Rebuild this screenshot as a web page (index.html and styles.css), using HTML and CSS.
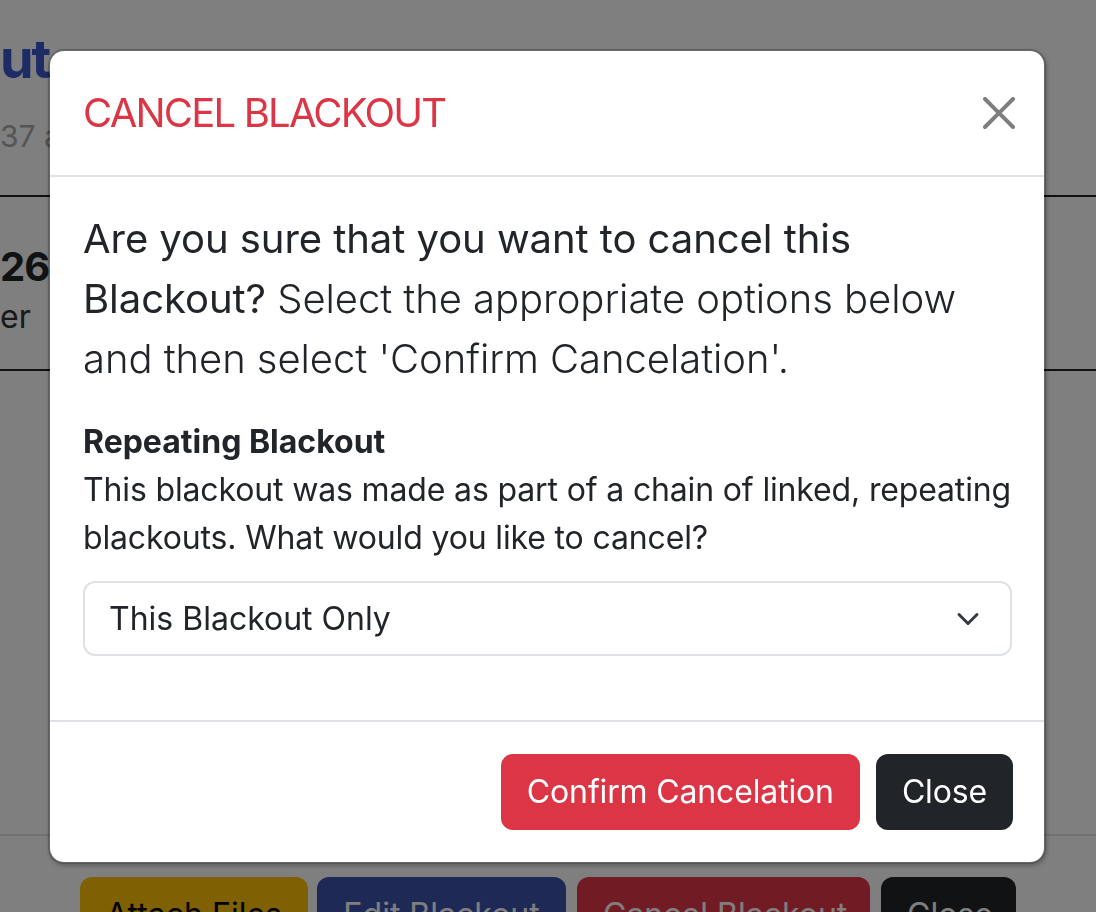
FILE: index.html
```html
<!DOCTYPE html>
<html lang="en">
<head>
<meta charset="utf-8">
<title>Cancel Blackout</title>
<link rel="stylesheet" href="styles.css">
</head>
<body>
<div class="page">
  <h2 class="page-title">ut</h2>
  <p class="page-sub">37 a</p>
  <div class="summary">
    <div class="summary-num">26</div>
    <div class="summary-label">er</div>
  </div>
  <div class="page-spacer"></div>
  <div class="page-footer">
    <button class="pbtn pbtn-warning">Attach Files</button>
    <button class="pbtn pbtn-primary">Edit Blackout</button>
    <button class="pbtn pbtn-danger">Cancel Blackout</button>
    <button class="pbtn pbtn-dark">Close</button>
  </div>
</div>

<div class="backdrop"></div>

<div class="modal">
  <div class="modal-dialog">
    <div class="modal-header">
      <h5 class="modal-title">CANCEL BLACKOUT</h5>
      <button class="btn-close" aria-label="Close">
        <svg viewBox="0 0 16 16" width="32" height="32"><path fill="#000" d="M.293.293a1 1 0 0 1 1.414 0L8 6.586 14.293.293a1 1 0 1 1 1.414 1.414L9.414 8l6.293 6.293a1 1 0 0 1-1.414 1.414L8 9.414l-6.293 6.293a1 1 0 0 1-1.414-1.414L6.586 8 .293 1.707a1 1 0 0 1 0-1.414z"/></svg>
      </button>
    </div>
    <div class="modal-body">
      <p class="lead"><span class="lead-strong">Are you sure that you want to cancel this Blackout?</span> Select the appropriate options below and then select 'Confirm Cancelation'.</p>
      <div class="field-label">Repeating Blackout</div>
      <p class="field-help">This blackout was made as part of a chain of linked, repeating blackouts. What would you like to cancel?</p>
      <div class="select">
        <span>This Blackout Only</span>
        <svg class="chev" viewBox="0 0 16 16" width="32" height="24" preserveAspectRatio="xMidYMid meet"><path fill="none" stroke="#343a40" stroke-linecap="round" stroke-linejoin="round" stroke-width="2" d="m2 5 6 6 6-6"/></svg>
      </div>
    </div>
    <div class="modal-footer">
      <button class="btn btn-danger">Confirm Cancelation</button>
      <button class="btn btn-dark">Close</button>
    </div>
  </div>
</div>
</body>
</html>
```

FILE: styles.css
```css
* { box-sizing: border-box; }
html, body { margin: 0; padding: 0; }
body {
  width: 1096px;
  height: 912px;
  overflow: hidden;
  background: #fff;
  font-family: Inter, "Noto Sans", "Liberation Sans", sans-serif;
  color: #212529;
  font-size: 32px;
  line-height: 1.5;
}
button { font-family: inherit; }

/* underlying page */
.page {
  height: 912px;
  display: flex;
  flex-direction: column;
  overflow: hidden;
}
.page-title {
  margin: 24px 0 0 0;
  font-size: 54px;
  line-height: 70px;
  font-weight: 700;
  letter-spacing: -2px;
  color: #3a56cc;
}
.page-sub {
  margin: 20px 0 0 0;
  font-size: 30px;
  line-height: 44px;
  color: #aaaaaa;
}
.summary {
  flex: none;
  margin-top: 37px;
  border-top: 2px solid #222;
  border-bottom: 2px solid #222;
  height: 176px;
  padding-top: 44px;
}
.summary-num {
  font-size: 40px;
  line-height: 52px;
  font-weight: 700;
  letter-spacing: -1px;
  color: #212529;
}
.summary-label {
  font-size: 32px;
  line-height: 48px;
  color: #333;
}
.page-spacer { flex: 1; }
.page-footer {
  flex: none;
  border-top: 2px solid #dee2e6;
  height: 78px;
  padding: 41px 0 0 80px;
  display: flex;
  gap: 9px;
  align-items: flex-start;
  overflow: hidden;
}
.pbtn {
  flex: none;
  white-space: nowrap;
  font-size: 32px;
  line-height: 48px;
  padding: 12px 24px;
  border: 2px solid transparent;
  border-radius: 12px;
  color: #fff;
  height: 76px;
}
.pbtn-warning { background: #ffc107; color: #000; width: 228px; }
.pbtn-primary { background: #3c55ab; width: 249px; }
.pbtn-danger { background: #e2384a; width: 293px; margin-left: 2px; }
.pbtn-dark { background: #212529; width: 135px; margin-left: 2px; }

/* overlay */
.backdrop {
  position: fixed;
  inset: 0;
  background: rgba(0, 0, 0, 0.5);
}
.modal {
  position: fixed;
  inset: 0;
}
.modal-dialog {
  width: 998px;
  margin: 49px 0 0 48px;
  background: #fff;
  border: 2px solid rgba(0, 0, 0, 0.175);
  background-clip: padding-box;
  border-radius: 16px;
  box-shadow: 1px 2px 4px rgba(0, 0, 0, 0.25);
}
.modal-header {
  display: flex;
  align-items: center;
  padding: 32px 32px 32px 33px;
  border-bottom: 2px solid #dee2e6;
}
.modal-title {
  margin: 0;
  font-size: 40px;
  line-height: 60px;
  font-weight: 400;
  color: #dc3545;
  letter-spacing: -1.8px;
}
.btn-close {
  margin: -16px -11px -16px auto;
  padding: 8px;
  width: 48px;
  height: 48px;
  border: 0;
  background: transparent;
  opacity: 0.5;
  display: flex;
}
.modal-body { padding: 32px 32px 32px 33px; }
.lead {
  margin: 0 0 32px 0;
  font-size: 40px;
  line-height: 60px;
  font-weight: 300;
  letter-spacing: -0.05px;
}
.lead-strong { font-weight: 400; }
.field-label {
  font-weight: 700;
  font-size: 32px;
  line-height: 48px;
  margin-top: -3px;
}
.field-help {
  margin: 0 0 19px 0;
  font-size: 32px;
  line-height: 48px;
  letter-spacing: -0.15px;
}
.select {
  display: flex;
  align-items: center;
  justify-content: space-between;
  height: 75px;
  padding: 12px 26px 12px 24px;
  border: 2px solid #dee2e6;
  border-radius: 12px;
  margin-bottom: 32px;
  font-size: 32px;
  line-height: 48px;
}
.chev { flex: none; }
.modal-footer {
  display: flex;
  justify-content: flex-end;
  align-items: center;
  padding: 24px 23px 24px 24px;
  border-top: 2px solid #dee2e6;
}
.btn {
  margin: 8px;
  font-size: 32px;
  line-height: 48px;
  padding: 12px 24px;
  border: 2px solid transparent;
  border-radius: 12px;
  color: #fff;
  height: 76px;
  white-space: nowrap;
  letter-spacing: -0.15px;
}
.btn-danger { background: #dc3545; }
.btn-dark { background: #212529; }
```
